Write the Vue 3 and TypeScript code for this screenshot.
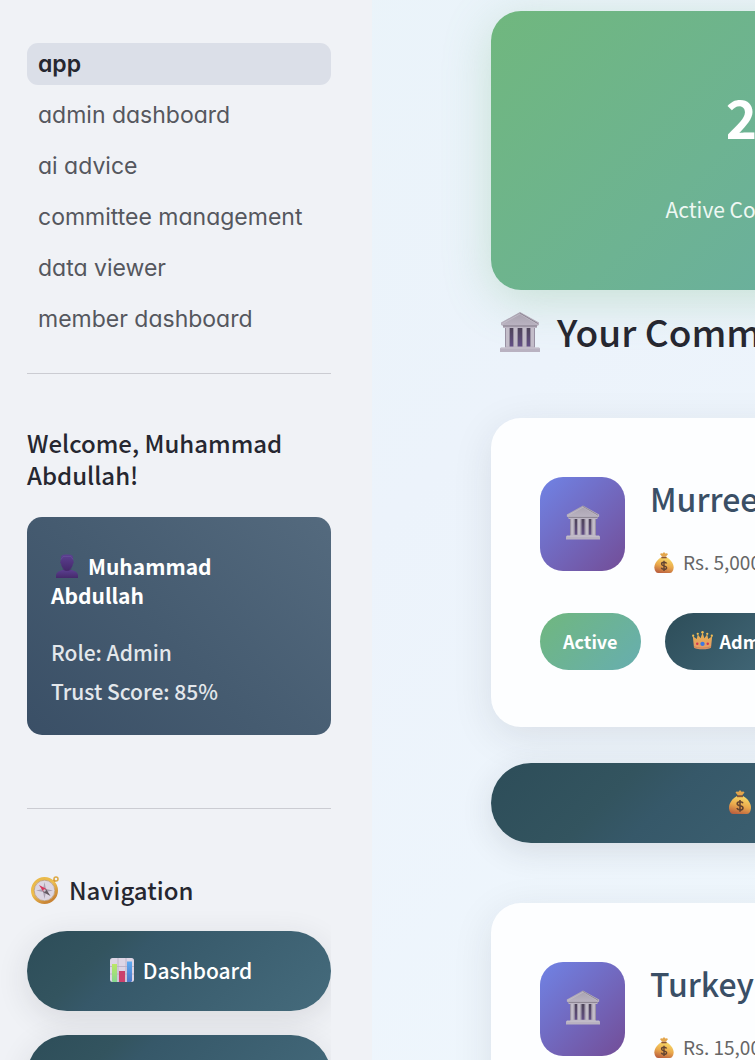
<script setup lang="ts">
import { ref } from 'vue'

interface Page {
  label: string
  slug: string
}

interface Committee {
  name: string
  amount: string
  status: string
  role: string
}

const pages: Page[] = [
  { label: 'app', slug: 'app' },
  { label: 'admin dashboard', slug: 'admin-dashboard' },
  { label: 'ai advice', slug: 'ai-advice' },
  { label: 'committee management', slug: 'committee-management' },
  { label: 'data viewer', slug: 'data-viewer' },
  { label: 'member dashboard', slug: 'member-dashboard' },
]

const current = ref('app')

const committees: Committee[] = [
  { name: 'Murree', amount: 'Rs. 5,000', status: 'Active', role: 'Admin' },
  { name: 'Turkey', amount: 'Rs. 15,000', status: 'Active', role: 'Admin' },
]
</script>

<template>
  <svg class="defs" aria-hidden="true">
    <defs>
      <linearGradient id="stone" x1="0" y1="0" x2="0" y2="1">
        <stop offset="0" stop-color="#a7a1ae" />
        <stop offset="1" stop-color="#bdb6c4" />
      </linearGradient>
      <linearGradient id="hall" x1="0" y1="0" x2="0" y2="1">
        <stop offset="0" stop-color="#4b4353" />
        <stop offset="1" stop-color="#65508a" />
      </linearGradient>
      <linearGradient id="purple" x1="0" y1="0" x2="0" y2="1">
        <stop offset="0" stop-color="#5c4091" />
        <stop offset="1" stop-color="#45296b" />
      </linearGradient>
      <linearGradient id="gold" x1="0" y1="0" x2="0.6" y2="1">
        <stop offset="0" stop-color="#e8b84a" />
        <stop offset="0.5" stop-color="#edbd4c" />
        <stop offset="1" stop-color="#c98536" />
      </linearGradient>
      <linearGradient id="sack" x1="0.7" y1="0" x2="0.4" y2="1">
        <stop offset="0" stop-color="#f8dc69" />
        <stop offset="0.55" stop-color="#eaa94c" />
        <stop offset="1" stop-color="#bd633f" />
      </linearGradient>
      <linearGradient id="crown-gold" x1="0" y1="0" x2="0" y2="1">
        <stop offset="0" stop-color="#e8b24f" />
        <stop offset="1" stop-color="#e69a67" />
      </linearGradient>
      <linearGradient id="bar-green" x1="0" y1="0" x2="0" y2="1">
        <stop offset="0" stop-color="#bce765" />
        <stop offset="1" stop-color="#85d790" />
      </linearGradient>
      <linearGradient id="bar-blue" x1="0" y1="0" x2="0" y2="1">
        <stop offset="0" stop-color="#5eabf2" />
        <stop offset="1" stop-color="#4d78c8" />
      </linearGradient>
      <symbol id="bank" viewBox="0 0 40 40">
        <path d="M5 14h30v22H5z" fill="url(#hall)" />
        <path d="M5 15h5v21H5zM13 15h5v21h-5zM22 15h5v21h-5zM30 15h5v21h-5z" fill="#c3bdc9" />
        <path d="M5 15h1v21H5zM13 15h1v21h-1zM22 15h1v21h-1zM30 15h1v21h-1zM9 15h1v21H9zM17 15h1v21h-1zM26 15h1v21h-1zM34 15h1v21h-1z" fill="#9890a2" />
        <path d="M20 0 39 10.500v2.500l-2 1v2H3v-2l-2-1v-2.500z" fill="url(#stone)" />
        <path d="M20 1.500 37.500 11.500M3 14h34" stroke="#817987" stroke-width="1" fill="none" />
        <path d="M2 12 20 2l17 10" stroke="#c7c2cd" stroke-width="0.700" fill="none" />
        <path d="M0 36.500 1 35.500h4l1-1h28l1 1h4l1 1V40H0z" fill="#b9b2c1" />
        <path d="M1 36h38" stroke="#d0cbd6" stroke-width="0.800" />
      </symbol>
      <symbol id="person" viewBox="0 0 24 24">
        <path d="M1 24v-2.500C1 18 5 16.500 9.500 15.500h5C19 16.500 23 18 23 21.500V24z" fill="url(#purple)" />
        <path d="M6 5C5.500 1 8 .500 12 .500S18.500 1 18 5l.5 2.500c.6.200.4 2-.6 2.200C17.500 13.500 15 16.500 12 16.500s-5.500-3-5.900-6.800C5.100 9.500 4.900 7.700 5.500 7.500z" fill="url(#purple)" />
        <path d="M6 5.500 8 2.500h8l2 3" stroke="#67509b" stroke-width="0.700" fill="none" />
        <path d="M7 14c2 3 8 3 10 0-1 4-9 4-10 0z" fill="#3d225f" opacity=".6" />
      </symbol>
      <symbol id="compass" viewBox="0 0 28 28">
        <circle cx="25" cy="3" r="2" fill="none" stroke="#dca945" stroke-width="1.500" />
        <path d="m21 7 2.500-2.500" stroke="#c98b37" stroke-width="3" />
        <circle cx="13.500" cy="14.500" r="12" fill="#e1dce5" stroke="url(#gold)" stroke-width="3" />
        <circle cx="13.500" cy="14.500" r="10.300" fill="#dcd6e2" stroke="#b9915d" stroke-width=".7" />
        <path d="m13.500 6 1.400 7.100 7.100 1.400-7.100 1.400-1.400 7.100-1.400-7.100L5 14.500l7.100-1.400z" fill="#aaa1b1" />
        <path d="m8 9 7.500 4-3 3z" fill="#d6365d" />
        <path d="m19.500 20-7.500-4 3-3z" fill="#625961" />
        <circle cx="13.500" cy="14.500" r="1.200" fill="#c9c1ce" />
      </symbol>
      <symbol id="chart" viewBox="0 0 24 24">
        <rect width="24" height="24" rx="2.500" fill="#ddd5e5" />
        <path d="M0 8.500h24M0 16h24M8 0v24M16 0v24" stroke="#bbb0c5" stroke-width=".9" />
        <path d="M2 6h5v18H3a1 1 0 0 1-1-1z" fill="url(#bar-green)" />
        <path d="M9 13h6v11H9z" fill="#cc416c" />
        <path d="M17 3.500h5V23l-1 1h-4z" fill="url(#bar-blue)" />
      </symbol>
      <symbol id="bag" viewBox="0 0 22 24">
        <path d="M8 6h6c4 2 8 7 8 11.500 0 3-1.500 6.500-4 6.500H4c-2.500 0-4-3.500-4-6.500C0 13 4 8 8 6z" fill="url(#sack)" />
        <path d="m7.500 1.500 2 .3L11 0l1.500 1.800 2-.3 1 1-2.500 3H9l-2.500-3z" fill="#e3a54b" />
        <path d="M8 5.500h6v1.700H8z" fill="#8a5436" />
        <path d="M14 13.200c-.4-1-1.500-1.500-3-1.500-1.700 0-2.800.7-2.800 2 0 3 5.800 1.200 5.800 4.200 0 1.300-1.200 2-3 2-1.600 0-2.700-.6-3.100-1.800M11 10v11.700" fill="none" stroke="#624331" stroke-width="1.600" />
      </symbol>
      <symbol id="crown" viewBox="0 0 22 20">
        <path d="M2 17 .8 5.500 5 8.500 6 3.500l3 4L11 1.500l2 6 3-4 1 5 4.200-3L20 17c-1 3-17 3-18 0z" fill="url(#crown-gold)" />
        <g fill="#f0bd54">
          <circle cx="1.200" cy="5" r="1.200" />
          <circle cx="6" cy="3" r="1.200" />
          <circle cx="11" cy="1.300" r="1.300" />
          <circle cx="16" cy="3" r="1.200" />
          <circle cx="20.800" cy="5" r="1.200" />
        </g>
        <path d="M2 16.500c4 2 14 2 18 0" stroke="#c37a54" stroke-width=".8" fill="none" />
        <circle cx="11" cy="13.500" r="2.300" fill="#3f78e0" />
        <circle cx="5.500" cy="13.500" r="1.300" fill="#d3344f" />
        <circle cx="16.500" cy="13.500" r="1.300" fill="#d3344f" />
      </symbol>
    </defs>
  </svg>

  <div class="layout">
    <aside class="sidebar">
      <nav class="pages" aria-label="Pages">
        <a
          v-for="page in pages"
          :key="page.slug"
          :href="'#' + page.slug"
          class="page-link"
          :class="{ active: page.slug === current }"
          @click="current = page.slug"
        >{{ page.label }}</a>
      </nav>
      <hr class="rule" />
      <h3 class="welcome">Welcome, Muhammad Abdullah!</h3>
      <section class="profile">
        <h4 class="profile-name"><svg class="icon-person" aria-hidden="true"><use href="#person" /></svg>Muhammad Abdullah</h4>
        <p class="profile-line">Role: Admin</p>
        <p class="profile-line">Trust Score: 85%</p>
      </section>
      <hr class="rule" />
      <h3 class="nav-title"><svg class="icon-compass" aria-hidden="true"><use href="#compass" /></svg>Navigation</h3>
      <div class="actions">
        <button type="button" class="pill">
          <svg class="icon-chart" aria-hidden="true"><use href="#chart" /></svg>Dashboard
        </button>
        <button type="button" class="pill" aria-label="Committees"></button>
      </div>
    </aside>

    <main class="content">
      <section class="stat">
        <div class="stat-value">20</div>
        <div class="stat-label">Active Committees</div>
      </section>
      <h2 class="section-title"><svg class="icon-heading" aria-hidden="true"><use href="#bank" /></svg>Your Committees</h2>
      <template v-for="committee in committees" :key="committee.name">
        <article class="committee">
          <header class="committee-head">
            <div class="tile"><svg class="icon-tile" aria-hidden="true"><use href="#bank" /></svg></div>
            <div>
              <h3 class="committee-name">{{ committee.name }}</h3>
              <p class="committee-amount"><svg class="icon-amount" aria-hidden="true"><use href="#bag" /></svg>{{ committee.amount }}</p>
            </div>
          </header>
          <div class="badges">
            <span class="badge badge-status">{{ committee.status }}</span>
            <span class="badge badge-role"><svg class="icon-crown" aria-hidden="true"><use href="#crown" /></svg>{{ committee.role }}</span>
          </div>
        </article>
        <button type="button" class="pill pay">
          <svg class="icon-pay" aria-hidden="true"><use href="#bag" /></svg>Pay
        </button>
      </template>
    </main>
  </div>
</template>

<style>
body {
  margin: 0;
}
</style>

<style scoped>
.defs {
  position: absolute;
  width: 0;
  height: 0;
}

.layout {
  display: grid;
  grid-template-columns: 372px minmax(651px, 1fr);
  height: 100vh;
  overflow: hidden;
  background: linear-gradient(135deg, #e9f4f9 0%, #ecf3fb 50%, #eff7fd 100%);
  color: #262730;
  font-family: "Noto Sans CJK SC", "Noto Sans", sans-serif;
}

h2,
h3,
h4,
p {
  margin: 0;
}

svg {
  flex: none;
}

.sidebar {
  box-sizing: border-box;
  min-height: 0;
  padding: 43px 0 0 27px;
  overflow: hidden;
  background: #f0f2f6;
  border-right: 41px solid #f0f2f6;
}

.pages {
  display: flex;
  flex-direction: column;
  gap: 9px;
}

.page-link {
  padding: 0 11px;
  border-radius: 11px;
  color: #55575e;
  font-family: Inter, sans-serif;
  font-feature-settings: "cv11";
  font-size: 23px;
  line-height: 42px;
  text-decoration: none;
}

.page-link.active {
  background: #dbdfe8;
  color: #262730;
  font-weight: 600;
}

.rule {
  height: 1px;
  margin: 33px 0 0;
  border: 0;
  background: #cbccd2;
}

.welcome {
  margin-top: 53px;
  font-size: 24px;
  font-weight: 500;
  line-height: 32px;
}

.profile {
  margin: 26px 0 73px;
  padding: 35px 24px 24px;
  border-radius: 15px;
  background: linear-gradient(45deg, #3a4f66 0%, #455b70 45%, #546a7e 100%);
  color: #fff;
}

.profile-name {
  margin-bottom: 23px;
  font-size: 21px;
  font-weight: 700;
  line-height: 29px;
}

.profile-line {
  color: #e3e7eb;
  font-size: 21px;
  font-weight: 500;
  line-height: 39px;
}

.profile + .rule {
  margin-top: 0;
}

.nav-title {
  display: flex;
  align-items: center;
  margin-top: 65px;
  font-size: 24px;
  font-weight: 500;
  line-height: 32px;
}

.actions {
  display: grid;
  gap: 24px;
  margin-top: 25px;
}

.pill {
  box-sizing: border-box;
  display: flex;
  align-items: center;
  justify-content: center;
  width: 100%;
  height: 80px;
  padding: 0 0 2px;
  border: 0;
  border-radius: 40px;
  background: linear-gradient(135deg, #2d4d59 0%, #33545f 25%, #365869 35%, #456b7c 100%);
  box-shadow: 0 8px 32px rgba(38, 39, 48, 0.12);
  color: #fff;
  font-family: inherit;
  font-size: 21px;
  font-weight: 500;
  line-height: 32px;
}

.content {
  padding: 11px 0 0 119px;
}

.stat {
  padding: 65px 24px 61px;
  border-radius: 30px;
  background: linear-gradient(135deg, #70b77e 0%, #6db392 45%, #67aca9 100%);
  box-shadow: 0 10px 48px rgba(112, 183, 126, 0.3);
  color: #fff;
  text-align: center;
}

.stat-value {
  font-size: 53px;
  font-weight: 700;
  line-height: 80px;
}

.stat-label {
  margin-top: 34px;
  color: #eff8f3;
  font-size: 21px;
  line-height: 39px;
}

.section-title {
  display: flex;
  align-items: center;
  margin: 17px 0 62px;
  font-size: 37px;
  font-weight: 500;
  line-height: 49px;
}

.committee {
  padding: 59px 49px 57px;
  border-radius: 30px;
  background: #fdfeff;
  box-shadow: 0 10px 40px rgba(38, 39, 48, 0.1);
}

.committee-head {
  display: flex;
  gap: 25px;
}

.tile {
  box-sizing: border-box;
  display: flex;
  align-items: center;
  justify-content: center;
  width: 85px;
  height: 94px;
  padding-bottom: 4px;
  border-radius: 23px;
  background: linear-gradient(135deg, #7083e5, #734d97);
}

.committee-name {
  color: #3a4f66;
  font-size: 32px;
  font-weight: 500;
  line-height: 43px;
}

.committee-amount {
  display: flex;
  align-items: center;
  margin-top: 24px;
  color: #666;
  font-size: 19px;
  line-height: 36px;
}

.badges {
  display: flex;
  gap: 24px;
  margin-top: 33px;
}

.badge {
  box-sizing: border-box;
  display: flex;
  align-items: center;
  height: 57px;
  padding: 0 23px 2px;
  border-radius: 29px;
  color: #fff;
  font-size: 18px;
  font-weight: 700;
  line-height: 36px;
}

.badge-status {
  background: linear-gradient(135deg, #70b77e, #67aeb0);
}

.badge-role {
  background: linear-gradient(135deg, #2d4d59, #456b7c);
}

.pay {
  margin: 36px 0 60px;
}

.icon-person {
  width: 24px;
  height: 24px;
  margin: 0 9px 0 4px;
  vertical-align: -3px;
}

.icon-compass {
  width: 28px;
  height: 28px;
  margin: 0 10px 0 4px;
}

.icon-chart {
  width: 24px;
  height: 24px;
  margin: 0 9px 0 4px;
}

.icon-heading {
  width: 40px;
  height: 40px;
  margin: 0 17px 0 9px;
}

.icon-tile {
  width: 34px;
  height: 35px;
}

.icon-amount {
  width: 20px;
  height: 21px;
  margin: 0 9px 0 4px;
}

.icon-crown {
  width: 21px;
  height: 19px;
  margin: 0 7px 0 4px;
}

.icon-pay {
  width: 22px;
  height: 24px;
  margin: 0 8px 0 11px;
}
</style>
